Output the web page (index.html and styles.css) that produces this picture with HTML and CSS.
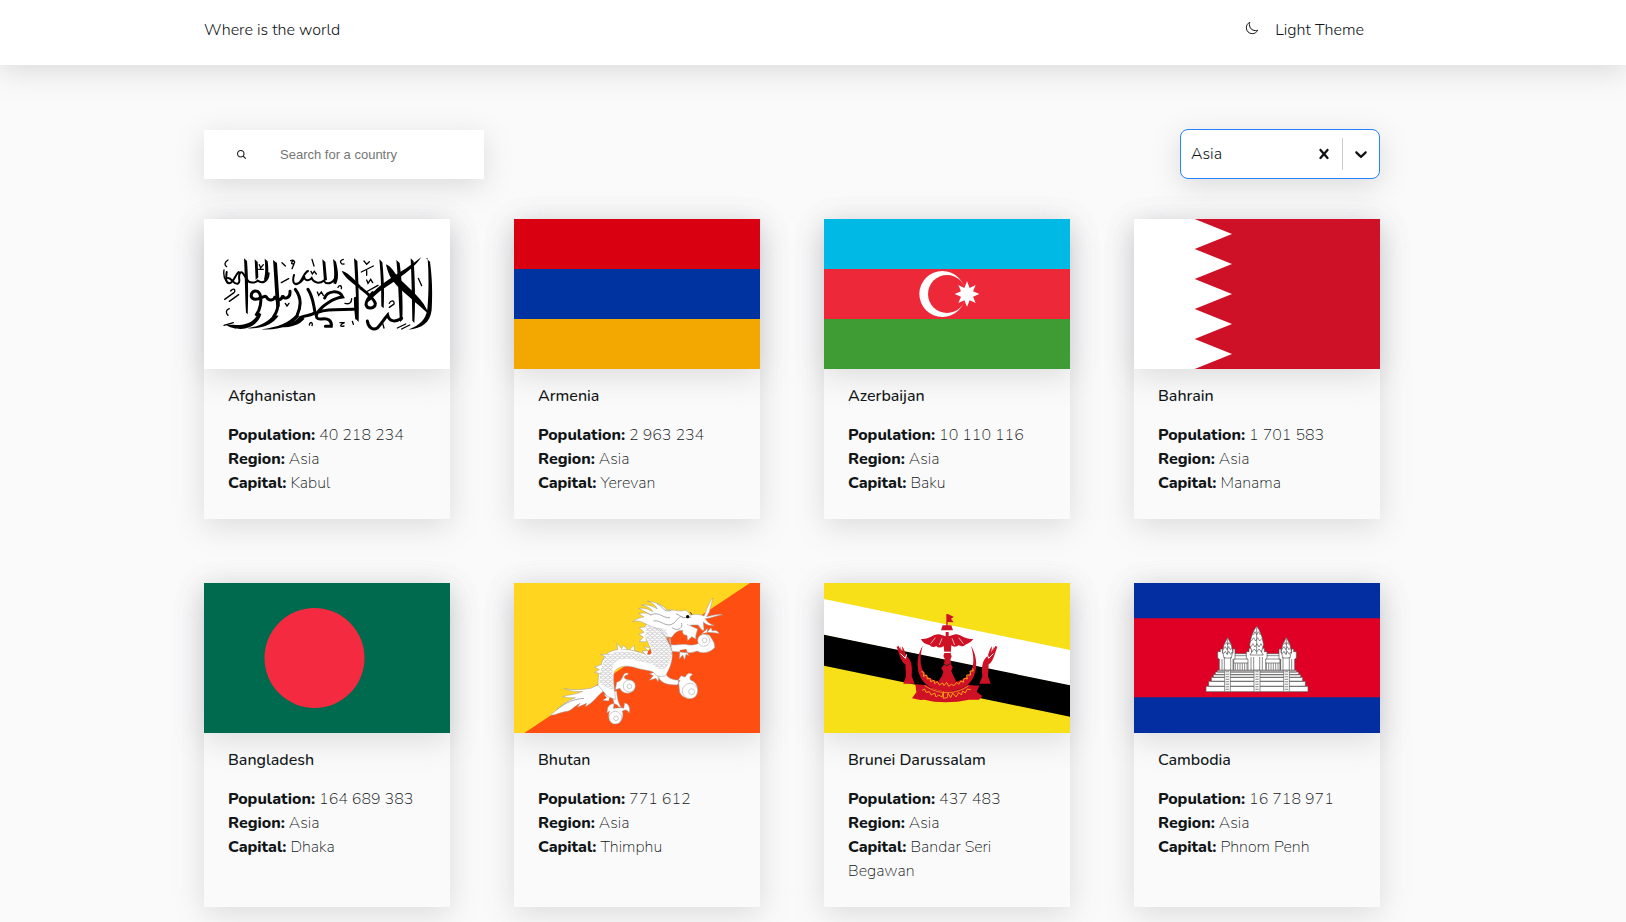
FILE: index.html
```html
<!DOCTYPE html>
<html lang="en">
<head>
<meta charset="utf-8">
<meta name="viewport" content="width=device-width, initial-scale=1">
<title>Where is the world</title>
<link rel="stylesheet" href="styles.css">
</head>
<body>
<header class="header">
  <div class="container header-row">
    <a class="brand" href="#">Where is the world</a>
    <button class="theme" type="button">
      <svg class="moon" viewBox="0 0 512 512" aria-hidden="true"><path d="M160 136c0-30.620 4.510-61.610 16-88C99.570 81.270 48 159.320 48 248c0 119.290 96.710 216 216 216 88.680 0 166.730-51.570 200-128-26.390 11.490-57.380 16-88 16-119.290 0-216-96.710-216-216z" fill="none" stroke="currentColor" stroke-width="36" stroke-linejoin="round"/></svg>
      Light Theme
    </button>
  </div>
</header>
<main class="container main">
  <div class="controls">
    <label class="search">
      <svg class="search-icon" viewBox="0 0 512 512" aria-hidden="true"><path d="M456.690 421.390 362.600 327.300a173.810 173.810 0 0 0 34.840-104.580C397.440 126.380 319.060 48 222.720 48S48 126.380 48 222.720s78.380 174.720 174.720 174.720A173.810 173.810 0 0 0 327.300 362.600l94.090 94.090a25 25 0 0 0 35.300-35.300zM97.920 222.720a124.800 124.800 0 1 1 124.800 124.800 124.950 124.950 0 0 1-124.800-124.800z" fill="currentColor"/></svg>
      <input class="search-input" type="search" placeholder="Search for a country" aria-label="Search for a country">
    </label>
    <div class="region">
      <select class="region-select" aria-label="Filter by region">
        <option>Africa</option><option>America</option><option selected>Asia</option><option>Europe</option><option>Oceania</option>
      </select>
      <button class="region-button" type="button" aria-label="Clear region"><svg class="region-icon" viewBox="0 0 20 20" aria-hidden="true"><path d="M14.348 14.849c-0.469 0.469-1.229 0.469-1.697 0l-2.651-3.030-2.651 3.029c-0.469 0.469-1.229 0.469-1.697 0-0.469-0.469-0.469-1.229 0-1.697l2.758-3.150-2.759-3.152c-0.469-0.469-0.469-1.228 0-1.697s1.228-0.469 1.697 0l2.652 3.031 2.651-3.031c0.469-0.469 1.228-0.469 1.697 0s0.469 1.229 0 1.697l-2.758 3.152 2.758 3.150c0.469 0.469 0.469 1.229 0 1.698z" fill="currentColor"/></svg></button>
      <span class="region-line"></span>
      <button class="region-button" type="button" aria-label="Open regions"><svg class="region-icon" viewBox="0 0 20 20" aria-hidden="true"><path d="M4.516 7.548c0.436-0.446 1.043-0.481 1.576 0l3.908 3.747 3.908-3.747c0.533-0.481 1.141-0.446 1.574 0 0.436 0.445 0.408 1.197 0 1.615-0.406 0.418-4.695 4.502-4.695 4.502-0.217 0.223-0.502 0.335-0.787 0.335s-0.570-0.112-0.789-0.335c0 0-4.287-4.084-4.695-4.502s-0.436-1.170 0-1.615z" fill="currentColor"/></svg></button>
    </div>
  </div>
  <section class="grid" aria-label="Countries">
    <article class="card">
      <svg class="flag" viewBox="12 27 738 450" preserveAspectRatio="none" role="img" aria-label="Flag of Afghanistan">
        <path fill="#fff" d="M12 27h738v450H12z"/>
        <g fill="#000">
          <path d="M132 145l9 8c4 50 4 110 2 160l-5-5c-3-50-3-110-6-163zM164 148l9 8 2 46-8 8zM194 146l9 8c4 30 2 48-6 62l-5-8c5-18 4-40 2-62zM219 150l12 9c3 50 7 92 8 130l-9 8c-5-40-7-100-11-147zM367 148l9 8 5 54-9 3zM399 147l9 8c7 30 9 48 0 68l-8-3c5-22 2-48-1-73zM462 145l10 8c4 60 5 130 4 183l-5-5c-3-60-5-130-9-186zM538 148l9 9c5 50 6 90 4 138l-7-6c0-50-1-90-6-141zM589 150l10 9c8 60 10 120 8 171l-7 6c-4-60-5-130-11-186zM632 145l9 9c5 70 5 130 2 185l-6-7c-1-60-2-120-5-187zM678 145l12 10c8 60 7 105 5 145-5 38-28 55-70 59 36-14 52-30 57-61 4-42 5-100 1-153z"/>
          <path d="M664 141c-15 24-40 44-70 65-30 22-62 38-82 64l-8 6c3-26 38-52 78-78 35-22 60-38 82-57zM558 163c20 8 26 30 45 48 26 26 70 60 83 101-35-32-70-60-95-85-20-20-28-40-33-64zM425 182c15 4 36 22 58 47l-6 6c-22-20-42-30-52-53z"/>
          <path d="M118 345c-12 0-26 0-42-2 14 10 26 14 46 14 30-1 52-16 62-44l-8-6c-10 24-30 37-58 38zM220 315c-14 20-40 34-78 40 44 2 76-12 94-38zM290 312c-22 26-58 40-106 46 54 4 92-12 114-40zM300 318c-16 18-30 27-58 34 34 0 56-8 72-26z"/>
        </g>
        <g fill="none" stroke="#000" stroke-width="9" stroke-linecap="round">
          <path d="M182 262c-10 8-24 8-28-2-2-12 8-20 18-16 10 6 12 24 9 42-2 12-6 20-12 28M270 244c2 22-20 26-22 12-2 16-20 18-22 2-4 16-21 14-26 4-4-7-10 0-16 0M234 268c2 20-2 36-12 50M286 238c18 24 18 50 6 76M324 238c16 24 16 47 21 68-6 12-28 8-42 16"/>
          <path d="M374 264c8-22 44-26 54-3-26 2-62 26-75 46 26-10 48-8 108-9M352 308c-6 14-2 20 12 19 20-4 32 4 30 22h-18"/>
          <path d="M482 234c18 14 38 28 44 46 0 16-24 20-28 4 0-14 10-24 20-36M605 325c-22 14-38 8-42-10-12 14-20 28-30 38-14 10-28 0-31-20M470 325c-4-30-4-40-4-60"/>
        </g>
        <g fill="none" stroke="#000" stroke-width="6" stroke-linecap="round">
          <path d="M206 190c-2 26-20 32-33 22-8 7-26 10-33-5-8-10-12-26-20-18-8 12 4 28-6 32-14 4-18-18-30-17M408 190c-2 32-28 36-37 22-12 10-30 8-36-8-8 10-20 8-22-2-8 14-18 22-30 18M80 186c-2 20-4 32 8 34 14-2 16-24 28-34M282 195c-6 20 0 32 12 26 14-8 16-32 30-38"/>
        </g>
        <g fill="none" stroke="#000" stroke-width="4" stroke-linecap="round">
          <path d="M84 150c-10 6-12 14-4 20M72 180c-2 14 0 24 6 32M74 268l28-20M88 274l28-20M92 243c6-8 14-8 12 2M88 296c-12 4-10 14-4 20M72 346l28-8M256 168l-10-10M272 152c10-4 14 4 10 8-6 4-10 0-4-6M282 162l-6 14M430 148c-14 4-8 16 2 14M414 232c4-8 12-6 10 4M435 280c12 4 20-2 20-14M492 153l8 10 8-8M484 186l36-18M500 182v14M498 246l36-20M500 210l4 10 8-12 6 10M178 164l4 10 8-10M176 178h14M333 184l4 8 6-8 6 8M352 246l4 10 8-10 6 10M568 280c4-10 16-10 14 2l-14 10M592 354l25-12M605 357l24-12M655 205l10 22M548 340l4 14M256 280l5 8 6-8M328 345c2-12 12-8 8 2M420 338h14c-12 4-18 14-2 10M457 334l3 9M244 218l22-12M336 148l6 20"/>
        </g>
      </svg>
      <div class="info"><h2 class="name">Afghanistan</h2><ul class="facts"><li><b>Population:</b> 40 218 234</li><li><b>Region:</b> Asia</li><li><b>Capital:</b> Kabul</li></ul></div>
    </article>
    <article class="card">
      <svg class="flag" viewBox="0 0 246 150" preserveAspectRatio="none" role="img" aria-label="Flag of Armenia"><path fill="#d90012" d="M0 0h246v50H0z"/><path fill="#0033a0" d="M0 50h246v50H0z"/><path fill="#f2a800" d="M0 100h246v50H0z"/></svg>
      <div class="info"><h2 class="name">Armenia</h2><ul class="facts"><li><b>Population:</b> 2 963 234</li><li><b>Region:</b> Asia</li><li><b>Capital:</b> Yerevan</li></ul></div>
    </article>
    <article class="card">
      <svg class="flag" viewBox="12 27 738 450" preserveAspectRatio="none" role="img" aria-label="Flag of Azerbaijan"><path fill="#00b9e4" d="M12 27h738v150H12z"/><path fill="#ed2939" d="M12 177h738v150H12z"/><path fill="#3f9c35" d="M12 327h738v150H12z"/><circle cx="367" cy="252" r="69" fill="#fff"/><circle cx="381" cy="252" r="57" fill="#ed2939"/><path fill="#fff" d="M441 214l8 20 18-9-8 19 19 8-19 8 8 19-18-8-8 19-8-19-18 8 8-19-19-8 19-8-8-19 18 9z"/></svg>
      <div class="info"><h2 class="name">Azerbaijan</h2><ul class="facts"><li><b>Population:</b> 10 110 116</li><li><b>Region:</b> Asia</li><li><b>Capital:</b> Baku</li></ul></div>
    </article>
    <article class="card">
      <svg class="flag" viewBox="12 27 738 450" preserveAspectRatio="none" role="img" aria-label="Flag of Bahrain"><path fill="#fff" d="M12 27h738v450H12z"/><path fill="#ce1126" d="M750 27H194l112 45-112 45 112 45-112 45 112 45-112 45 112 45-112 45 112 45-112 45h556z"/></svg>
      <div class="info"><h2 class="name">Bahrain</h2><ul class="facts"><li><b>Population:</b> 1 701 583</li><li><b>Region:</b> Asia</li><li><b>Capital:</b> Manama</li></ul></div>
    </article>
    <article class="card">
      <svg class="flag" viewBox="0 0 246 150" preserveAspectRatio="none" role="img" aria-label="Flag of Bangladesh"><path fill="#006a4e" d="M0 0h246v150H0z"/><circle cx="110.500" cy="75" r="50" fill="#f42a41"/></svg>
      <div class="info"><h2 class="name">Bangladesh</h2><ul class="facts"><li><b>Population:</b> 164 689 383</li><li><b>Region:</b> Asia</li><li><b>Capital:</b> Dhaka</li></ul></div>
    </article>
    <article class="card">
      <svg class="flag" viewBox="12 24 738 450" preserveAspectRatio="none" role="img" aria-label="Flag of Bhutan">
        <defs><pattern id="scales" width="14" height="12" patternUnits="userSpaceOnUse"><path d="M0 0q0 6 7 6t7-6M-7 6q0 6 7 6t7-6M7 6q0 6 7 6t7-6" fill="none" stroke="#aaa" stroke-width="1.500"/></pattern></defs>
        <path fill="#ffd520" d="M12 24h738v450H12z"/><path fill="#ff4e12" d="M720 24h30v450H43z"/>
        <g fill="#fff" stroke="#999" stroke-width="1.500" stroke-linejoin="round">
          <path d="M290 315c-18 12-34 18-48 25-24 4-48 6-79 1 20 8 37 10 55 8-20 10-42 10-60 16 14 4 28 4 38 3-26 10-38 22-50 32-10 9-18 14-25 21 22-2 34-11 51-12 14-3 20-15 38-24l-8 12 28-12-4 10c20-10 30-24 44-38 14-12 25-18 34-30z"/>
          <path d="M306 350c0 24 10 30 4 50l24-2c-10-16-12-28-14-50zM300 362l-18-4 8 10-12 8 18 2M293 398c8-15 24-16 34-2l14 4 3-16c14 2 18 20 13 30-5-12-12-10-20-6 6 18-4 38-22 38-20-4-22-26-16-38l-8 6z"/>
          <path d="M320 322c20-4 16-26 28-28 8-1 10 4 2 6-12 4-8 14 6 14 20 4 24 28 10 36-16 10-32 2-36-10l-14 4zM440 298c12 28 30 32 62 32l8-14c-30-2-42-10-44-28zM436 292l-18 4 12 6-12 14 20-6 6 10 4-20M505 315l8-13 12 4 8-10c8-4 16 2 14 4-10 4-8 12-4 16 20 6 24 30 14 44-14 18-40 10-48-8z"/>
          <path d="M480 182c-8 38 14 26 46 26 14 4 26 2 38-2l4-16c6-18 20-14 32-8 4 10 16 20 14 36-12 14-38 20-52 10-30 12-50 0-78 2zM510 226l-2 26 10-12 6 14 4-16 8 4-8-20"/>
          <path d="M264 330c0-36 8-70 24-92 24-20 64-18 100-6 18 6 34 10 36 2 0-20-18-36-21-64-2-26 20-34 44-42l45 34c-14 4-28 10-26 22 6 18 26 36 20 68-6 32-14 36-18 50-16 4-30 2-34-6-8-12-28-8-58-18-26-8-48-6-62 10-8 20 2 60 2 86l-24-10z"/>
          <path d="M323 225l-2-20 14 16 4-10 12 10M360 223l12-12 2 16 14 4M300 238l-28 0 16 8-14 12M276 268l-22 8 14 8-14 8 18 4M410 242l-14-14 18-1-12-12 16 3M408 200l-20 0 12-14-14-8 16-6-14-14 16-2"/>
          <path d="M402 144c-10-6-20-8-34-4 14-10 26-14 34-14l-16-10c14-4 28-2 38 4l-38-20c20-2 32 4 42 10-2-10-22-18-34-20 20-2 34 4 48 12-6-14-22-22-30-24 30 4 48 14 60 28 20-5 30 4 44 2 14-8 22 6 24 13 15-6 32-2 42 2 8-16 12-38 27-54-5 20-10 32-10 40l-9 16c16-2 30-9 48-5-16 0-28 8-52 11 8 14 16 16 27 20-17 2-24-2-33-10l2 25c-10 0-12-10-18-16l-22 0c4 16 18 28 16 42l-13-7-12 12-2-16c-10 0-16-8-12-14-16-2-22 4-34 20-28 0-20-8-36-24l-24-8z"/>
          <path d="M555 190l8-28-32-14M575 176l18-16-2 12 12-14 4 10c12-4 18 2 20 8-10-4-20-2-34-4"/>
        </g>
        <path fill="url(#scales)" d="M268 326c0-30 8-66 24-84 24-18 64-16 100-4 20 8 36 8 36-4 0-20-18-36-21-62l2-20 58 10c2 20 26 38 20 70-6 30-14 34-18 48-16 4-30 2-34-6-8-12-28-8-58-18-26-8-52-6-66 10-8 20 2 60 2 82z"/>
        <path fill="none" stroke="#aaa" stroke-width="3" d="M440 86c20 8 20 28 44 20M420 120c30-12 36 10 60 8M430 138c22-6 38 24 62 6 16-16 20-26 28-14M498 116c18 8 18 16 46 10M486 158c20 14 34-2 28-14M140 404c30-24 54-32 82-34"/>
        <circle cx="533" cy="125" r="5"/><path d="M541 112l5 7" stroke="#222" stroke-width="3"/>
        <g fill="#fff" stroke="#999" stroke-width="1.500"><circle cx="358" cy="333" r="18"/><circle cx="358" cy="334" r="7"/><circle cx="316" cy="428" r="19"/><circle cx="318" cy="430" r="7"/><circle cx="540" cy="348" r="23"/><circle cx="545" cy="350" r="9"/><circle cx="581" cy="196" r="18"/><circle cx="584" cy="196" r="7"/></g>
      </svg>
      <div class="info"><h2 class="name">Bhutan</h2><ul class="facts"><li><b>Population:</b> 771 612</li><li><b>Region:</b> Asia</li><li><b>Capital:</b> Thimphu</li></ul></div>
    </article>
    <article class="card">
      <svg class="flag" viewBox="12 24 738 450" preserveAspectRatio="none" role="img" aria-label="Flag of Brunei">
        <path fill="#f7e017" d="M12 24h738v450H12z"/><path fill="#fff" d="M12 72l738 153v107L12 180z"/><path d="M12 179l738 152v94L12 272z"/>
        <g fill="#cf1126">
          <path d="M379 117h4l18 8-8 7 8 10-18-1v10h11l5 15h-36l5-15h11z"/>
          <path d="M303 192c27 2 35-16 55-14l19 6v-13h9v13l20-6c16-2 26 16 54 14-8 10-16 14-24 17-6 6-14 5-20 2-8 6-16 5-22 0l-2 25 3 8-4 10 3 16 4 6-4 12 4 10 10 20-8 8h-36l-8-8 10-15 4-12-6-12 8-10 2-18-4-8 3-8-2-22c-8 6-16 6-22 0-8 5-16 3-20-3-12-2-20-6-26-18z"/>
          <path d="M308 212c-23 38-20 88 10 116 34 28 92 28 127 0 29-28 31-78 8-116 13 43 9 78-17 96-31 20-76 20-108 0-28-18-32-53-20-96z"/>
          <path d="M286 328l32 2c40 26 90 24 124 0l36 2-8 18 17 13-10 11h-30c-44 10-98 10-134 0l-12 1-25-5 13-18z"/>
          <path d="M230 215l6-2 6 12-2-12 8 20-2-19c8 8 8 20 14 30 14 12 18 28 15 60l9 22h-34l8-22-2-36c-14-8-18-32-26-53zM532 215l-6-2-6 12 2-12-8 20 2-19c-8 8-8 20-14 30-14 12-18 28-15 60l-9 22h34l-8-22 2-36c14-8 18-32 26-53z"/>
        </g>
        <path d="M366 190l-8 20M396 190l8 20M346 188l-14 18M416 188l14 18" stroke="#fff" stroke-width="2"/>
        <path d="M242 236l14 14 4-12M520 236l-14 14-4-12" stroke="#fff" stroke-width="3" fill="none"/><path d="M370 232h22" stroke="#fff" stroke-width="4"/><path d="M368 266l12 6 12-6" stroke="#222" stroke-width="3" fill="none"/>
        <path d="M314 332c42 28 92 28 132 0" fill="none" stroke="#f7c017" stroke-width="2"/>
        <g fill="none" stroke="#f7a017" stroke-width="3"><path d="M304 290l8 2-2 12 10-4 2 12 8-2 2 10 10-4 2 10 8-6 6 10 10-6 4 8 8-10 6 12 8-6 8 4 8-10 6 6 6-10 8 4 2-12 10 2-2-12 12 0-2-12 10 0-2-8"/><path d="M306 346l8-4 4 10 10-2 6 10 10-6 4 12 8-6 10 6 4-16v20l12-2 2-14 8 14 6-14 10 12 8-14 8 8 4-12 8 6 6-12 10 2"/></g>
      </svg>
      <div class="info"><h2 class="name">Brunei Darussalam</h2><ul class="facts"><li><b>Population:</b> 437 483</li><li><b>Region:</b> Asia</li><li><b>Capital:</b> Bandar Seri Begawan</li></ul></div>
    </article>
    <article class="card">
      <svg class="flag" viewBox="12 24 738 450" preserveAspectRatio="none" role="img" aria-label="Flag of Cambodia">
        <defs><g id="spire"><path d="M0 0l5 10 6 12 4 20-4 20h-22l-4-20 4-20 6-12z"/><path d="M-8 22l5-6 3 6 4-6 5 7M-13 36l6-8 5 9 5-9 5 9 5-7M-13 50l6-8 5 9 5-9 6 9 4-7M0 2v50" fill="none"/></g></defs>
        <path fill="#032ea1" d="M12 24h738v450H12z"/><path fill="#e00025" d="M12 130h738v237H12z"/>
        <g fill="#fff" stroke="#555" stroke-width="2">
          <path d="M310 236h140v50H310z"/><path d="M308 252h144M308 264h144M310 242h140" fill="none"/>
          <path d="M316 264v22m7-22v22m7-22v22m7-22v22m7-22v22m7-22v22m58-22v22m7-22v22m7-22v22m7-22v22m7-22v22m7-22v22" fill="none"/>
          <path d="M268 286v-34l-5-2v-20h8v-8h6v12h32v-12h6v30h-4v34zM494 286v-34l5-2v-20h-8v-8h-6v12h-32v-12h-6v30h4v34zM354 286v-34l-5-2v-20h8v-10h8v12h30v-12h8v10h8v20l-4 2v34z"/>
          <use href="#spire" x="293" y="187"/><use href="#spire" x="469" y="187"/>
          <path d="M380 153l8 13 8 20 5 24-7 20 6 10h-40l6-10-7-20 5-24 8-20z"/><path d="M370 180l5-10 5 10 5-10 6 10M364 198l7-10 6 10 6-10 6 10 7-8M362 216l7-10 6 10 6-10 6 10 6-10 5 9M365 231l8-9 7 9 7-9 8 9M380 155v82" fill="none"/>
          <path d="M276 252v34m7-40v40m19-40v40m7-34v34M452 252v34m7-40v40m19-40v40m7-34v34M363 246v40m8-40v40m18-40v40m8-40v40" fill="none"/>
          <path d="M262 286h238v5H262zM256 291h250v8H256zM250 299h262v8H250zM244 307h274v12H244zM236 319h290v15H236zM228 334h306v16H228z"/>
          <path d="M284 286h17v64h-17zM372 286h18v64h-18zM461 286h17v64h-17z"/>
        </g>
        <path d="M292 288v62M381 288v62M469 288v62" stroke="#888" stroke-width="10" stroke-dasharray="2 3"/>
      </svg>
      <div class="info"><h2 class="name">Cambodia</h2><ul class="facts"><li><b>Population:</b> 16 718 971</li><li><b>Region:</b> Asia</li><li><b>Capital:</b> Phnom Penh</li></ul></div>
    </article>
  </section>
</main>
</body>
</html>
```
FILE: styles.css
```css
:root {
  --text: #111517;
  --page: #fafafa;
  --shadow: 0 7px 29px rgba(100, 100, 111, 0.2);
}

* { box-sizing: border-box; }

body {
  margin: 0;
  background: var(--page);
  color: var(--text);
  font: 300 16px/24px Nunito, Lato, sans-serif;
}

button, select { font: inherit; color: inherit; }

.container {
  max-width: 1218px;
  margin: 0 auto;
  padding-right: 42px;
}

.header {
  background: #fff;
  box-shadow: var(--shadow);
}

.header-row {
  display: flex;
  justify-content: space-between;
  padding-top: 18px;
  padding-bottom: 23px;
}

.brand { color: inherit; text-decoration: none; }

.theme {
  display: flex;
  gap: 16px;
  padding: 0 16px 0 0;
  border: 0;
  background: none;
  cursor: pointer;
}

.moon { width: 14px; height: 14px; margin-top: 3px; }

.main { padding-top: 64px; padding-bottom: 15px; }

.controls {
  display: flex;
  justify-content: space-between;
  gap: 24px;
  margin-bottom: 40px;
}

.search {
  display: flex;
  align-items: center;
  gap: 33px;
  width: 280px;
  height: 49px;
  margin-top: 1px;
  padding: 0 32px;
  background: #fff;
  box-shadow: var(--shadow);
}

.search-icon { flex: none; width: 11px; height: 11px; }

.search-input {
  flex: 1;
  min-width: 0;
  padding: 0;
  border: 0;
  outline: 0;
  background: none;
  font: 13px/16px "Liberation Sans", Arial, sans-serif;
}

.search-input::placeholder { color: #757575; opacity: 1; }

.region {
  display: flex;
  align-items: center;
  width: 200px;
  height: 50px;
  border: 1px solid #2684ff;
  border-radius: 8px;
  background: #fff;
  box-shadow: var(--shadow);
}

.region-select {
  flex: 1;
  min-width: 0;
  padding: 0 10px;
  border: 0;
  outline: 0;
  background: none;
  appearance: none;
}

.region-button {
  display: flex;
  padding: 8px;
  border: 0;
  background: none;
}

.region-icon { width: 20px; height: 20px; }

.region-line { width: 1px; height: 32px; background: #ccc; }

.grid {
  display: grid;
  grid-template-columns: repeat(4, minmax(0, 1fr));
  gap: 64px;
}

.card { background: var(--page); box-shadow: var(--shadow); }

.flag {
  display: block;
  width: 100%;
  height: 150px;
  box-shadow: var(--shadow);
}

.info { padding: 15px 24px 24px; }

.name { margin: 0 0 15px; font-size: 16px; line-height: 24px; font-weight: 500; }

.facts { margin: 0; padding: 0; list-style: none; font-weight: 200; }

.facts b { font-weight: 800; }

@media (max-width: 1000px) {
  .container { padding-left: 24px; padding-right: 24px; }
  .grid { grid-template-columns: repeat(auto-fill, minmax(220px, 1fr)); gap: 32px; }
}
```
